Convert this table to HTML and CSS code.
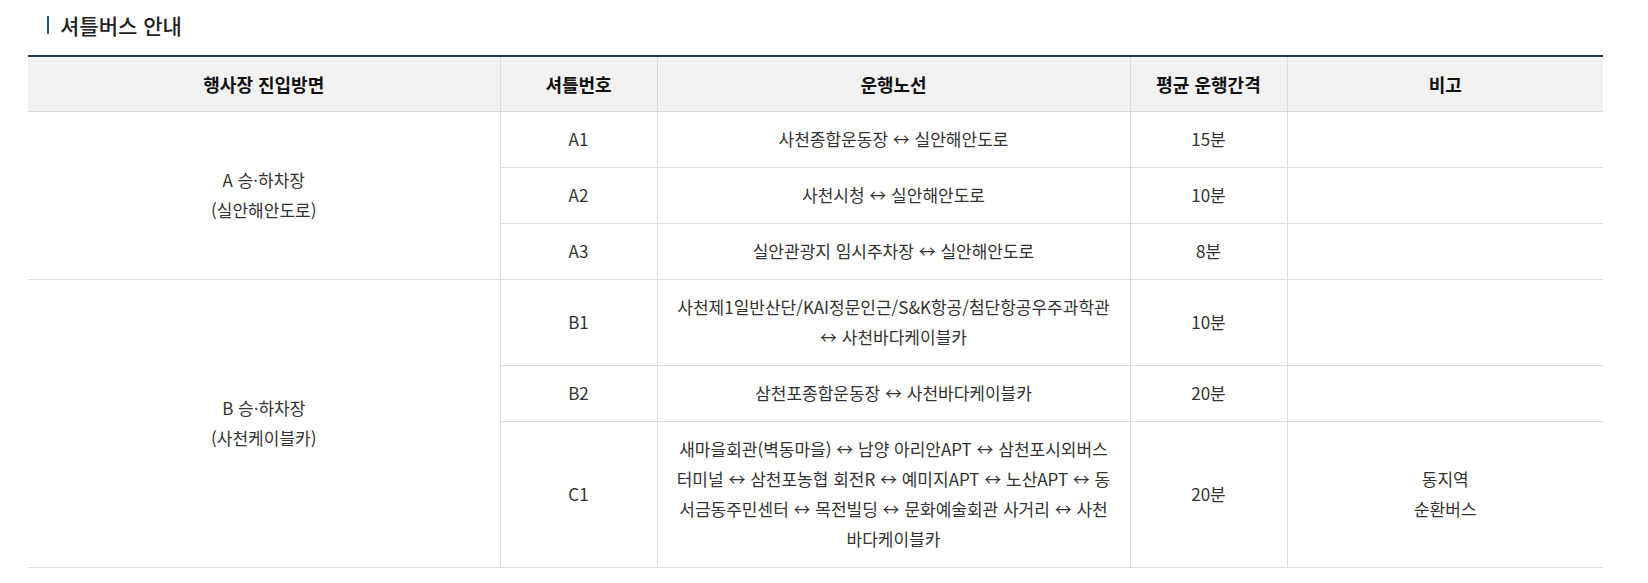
FILE: index.html
```html
<!DOCTYPE html>
<html lang="ko">
<head>
<meta charset="utf-8">
<title>셔틀버스 안내</title>
<link rel="stylesheet" href="styles.css">
</head>
<body>
<div class="page">
  <h3 class="title">셔틀버스 안내</h3>
  <table class="shuttle">
    <colgroup>
      <col class="c1"><col class="c2"><col class="c3"><col class="c4"><col class="c5">
    </colgroup>
    <thead>
      <tr>
        <th>행사장 진입방면</th>
        <th>셔틀번호</th>
        <th>운행노선</th>
        <th>평균 운행간격</th>
        <th>비고</th>
      </tr>
    </thead>
    <tbody>
      <tr>
        <td rowspan="3" class="area">A 승·하차장<br>(실안해안도로)</td>
        <td>A1</td>
        <td>사천종합운동장 ↔ 실안해안도로</td>
        <td>15분</td>
        <td></td>
      </tr>
      <tr>
        <td>A2</td>
        <td>사천시청 ↔ 실안해안도로</td>
        <td>10분</td>
        <td></td>
      </tr>
      <tr>
        <td>A3</td>
        <td>실안관광지 임시주차장 ↔ 실안해안도로</td>
        <td>8분</td>
        <td></td>
      </tr>
      <tr>
        <td rowspan="3" class="area">B 승·하차장<br>(사천케이블카)</td>
        <td>B1</td>
        <td>사천제1일반산단/KAI정문인근/S&amp;K항공/첨단항공우주과학관<br>↔ 사천바다케이블카</td>
        <td>10분</td>
        <td></td>
      </tr>
      <tr>
        <td>B2</td>
        <td>삼천포종합운동장 ↔ 사천바다케이블카</td>
        <td>20분</td>
        <td></td>
      </tr>
      <tr>
        <td>C1</td>
        <td class="route">새마을회관(벽동마을) ↔ 남양 아리안APT ↔ 삼천포시외버스 터미널 ↔ 삼천포농협 회전R ↔ 예미지APT ↔ 노산APT ↔ 동서금동주민센터 ↔ 목전빌딩 ↔ 문화예술회관 사거리 ↔ 사천바다케이블카</td>
        <td>20분</td>
        <td>동지역<br>순환버스</td>
      </tr>
    </tbody>
  </table>
</div>
</body>
</html>
```

FILE: styles.css
```css
html, body {
  margin: 0;
  padding: 0;
  background: #fff;
}
body {
  font-family: "Noto Sans CJK KR", "Noto Sans", sans-serif;
  color: #333;
}
.page {
  padding: 10px 0 0 28px;
}
.title {
  position: relative;
  margin: 0 0 15px 0;
  padding-left: 32px;
  font-size: 21px;
  line-height: 30px;
  font-weight: 500;
  color: #222;
  letter-spacing: 0;
}
.title::before {
  content: "";
  position: absolute;
  left: 19px;
  top: 6px;
  width: 2px;
  height: 18px;
  background: #1d4f91;
}
.shuttle {
  width: 1575px;
  table-layout: fixed;
  border-collapse: collapse;
  border-top: 2px solid #243a52;
}
.c1 { width: 472px; }
.c2 { width: 157px; }
.c3 { width: 473px; }
.c4 { width: 157px; }
.c5 { width: 316px; }
.shuttle th {
  background: #f2f2f2;
  font-size: 18px;
  font-weight: 700;
  color: #111;
  height: 54px;
  padding: 0 10px;
  border-bottom: 1px solid #ddd;
  border-left: 1px solid #ddd;
  letter-spacing: 0;
}
.shuttle th:first-child {
  border-left: 0;
}
.shuttle td {
  text-align: center;
  font-size: 17px;
  line-height: 30px;
  padding: 12px 15px 13px;
  border-bottom: 1px solid #ddd;
  border-left: 1px solid #ddd;
  color: #333;
  letter-spacing: 0;
}
.shuttle td.area {
  border-left: 0;
}
```
